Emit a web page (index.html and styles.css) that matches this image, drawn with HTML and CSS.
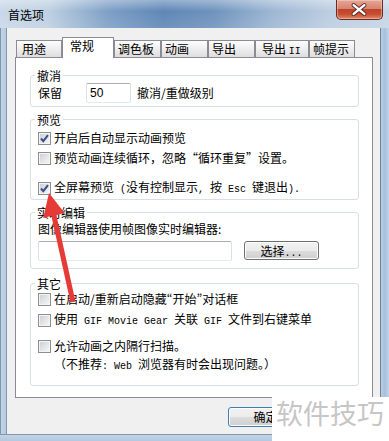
FILE: index.html
```html
<!DOCTYPE html>
<html lang="zh-CN">
<head>
<meta charset="utf-8">
<title>首选项</title>
<link rel="stylesheet" href="styles.css">
</head>
<body>
<div class="window">
  <div class="titlebar">
    <span class="title">首选项</span>
    <div class="close">
      <svg width="47" height="20" viewBox="0 0 47 20">
        <path d="M18 5 L29 14 M29 5 L18 14" stroke="#5a2a22" stroke-width="4.2" stroke-linecap="round"/>
        <path d="M18 5 L29 14 M29 5 L18 14" stroke="#ffffff" stroke-width="2.4" stroke-linecap="round"/>
      </svg>
    </div>
  </div>
  <div class="mid">
    <div class="frame-left"></div>
    <div class="client">
      <div class="tabs">
        <div class="tab w46 p5">用途</div>
        <div class="tab sel">常规</div>
        <div class="tab w47">调色板</div>
        <div class="tab w47">动画</div>
        <div class="tab w47">导出</div>
        <div class="tab w54">导出 <span class="m">II</span></div>
        <div class="tab w46">帧提示</div>
      </div>
      <div class="panel">
        <div class="group g1">
          <div class="gtitle">撤消</div>
          <div class="row r20">
            <span>保留</span>
            <div class="input num">50</div>
            <span class="after">撤消/重做级别</span>
          </div>
        </div>
        <div class="group g2">
          <div class="gtitle">预览</div>
          <div class="row cbrow first">
            <span class="cb"><svg width="11" height="11" viewBox="0 0 11 11"><path d="M2 5.5 L4.3 8.2 L9 2.2" fill="none" stroke="#3a4f86" stroke-width="2"/></svg></span>
            <span>开启后自动显示动画预览</span>
          </div>
          <div class="row cbrow second">
            <span class="cb"></span>
            <span>预览动画连续循环，忽略<span class="fw">“</span>循环重复<span class="fw">”</span>设置。</span>
          </div>
          <div class="row cbrow third">
            <span class="cb"><svg width="11" height="11" viewBox="0 0 11 11"><path d="M2 5.5 L4.3 8.2 L9 2.2" fill="none" stroke="#3a4f86" stroke-width="2"/></svg></span>
            <span>全屏幕预览<span class="m"> (</span>没有控制显示<span class="m">, </span>按<span class="m"> Esc </span>键退出<span class="m">).</span></span>
          </div>
        </div>
        <div class="group g3">
          <div class="gtitle">实时编辑</div>
          <div class="line">图像编辑器使用帧图像实时编辑器:</div>
          <div class="row editrow">
            <div class="input wide"></div>
            <div class="btn choose">选择<span class="m">...</span></div>
          </div>
        </div>
        <div class="group g4">
          <div class="gtitle">其它</div>
          <div class="row cbrow o1">
            <span class="cb"></span>
            <span>在启动/重新启动隐藏<span class="pw">“</span>开始<span class="pw">”</span>对话框</span>
          </div>
          <div class="row cbrow o2">
            <span class="cb"></span>
            <span>使用<span class="m"> GIF Movie Gear </span>关联<span class="m"> GIF </span>文件到右键菜单</span>
          </div>
          <div class="row cbrow o3">
            <span class="cb"></span>
            <span>允许动画之内隔行扫描。</span>
          </div>
          <div class="note">（不推荐<span class="m">: Web </span>浏览器有时会出现问题。）</div>
        </div>
      </div>
      <div class="footer">
        <div class="btn ok">确定</div>
      </div>
    </div>
    <div class="frame-right"></div>
  </div>
  <div class="frame-bottom"></div>
  <svg class="arrow" width="389" height="441" viewBox="0 0 389 441">
    <polygon points="49,193 64.6,213.1 56.4,214.9 75.5,301.4 70.5,302.6 51.4,216.1 43.2,217.9" fill="#e63a37"/>
  </svg>
  <div class="watermark">软件技巧</div>
</div>
</body>
</html>
```

FILE: styles.css
```css
html, body {
  margin: 0;
  padding: 0;
}
body {
  font-family: "Noto Sans CJK SC", "Liberation Sans", sans-serif;
  font-size: 12px;
  color: #000;
  background: #fff;
}
.window {
  position: relative;
  width: 389px;
  height: 441px;
  overflow: hidden;
}
.titlebar {
  height: 28px;
  display: flex;
  align-items: flex-start;
  background:
    linear-gradient(180deg, rgba(255,255,255,0.35) 0, rgba(255,255,255,0) 40%, rgba(255,255,255,0.1) 100%),
    linear-gradient(90deg, #c9d8e8 0, #bfd1e3 12%, #7d9fc6 28%, #5f87b6 42%, #6f93bd 55%, #9db7d3 70%, #bccee1 85%, #c6d5e5 100%);
}
.title {
  margin-left: 8px;
  margin-top: 7px;
  line-height: 16px;
}
.close {
  margin-left: auto;
  margin-right: 6px;
  width: 47px;
  height: 20px;
  box-sizing: border-box;
  border: 1px solid #6b2a20;
  border-top: none;
  border-radius: 0 0 5px 5px;
  background: linear-gradient(180deg, #e6a696 0%, #d78470 45%, #c0422a 50%, #c64f33 75%, #de8a69 100%);
  box-shadow: inset 0 0 0 1px rgba(255,220,210,0.45);
  display: flex;
}
.close svg {
  margin-left: -1px;
  margin-top: 0;
}
.mid {
  display: flex;
  height: 406px;
}
.frame-left {
  width: 7px;
  background: linear-gradient(90deg, #7f95ad 0, #7f95ad 1px, #c3d4e6 1px, #b6c9de 6px, #8496ab 6px, #8496ab 7px);
}
.frame-right {
  width: 9px;
  background: linear-gradient(90deg, #6d829a 0, #6d829a 1px, #b9cde2 1px, #a6c0dc 5px, #c3d5e8 9px);
}
.frame-bottom {
  height: 7px;
  background: linear-gradient(180deg, #8496ab 0, #8496ab 1px, #c2d4e7 1px, #b4c8de 7px);
}
.client {
  width: 373px;
  background: #f0f0f0;
  padding-top: 9px;
  padding-left: 8px;
  box-sizing: border-box;
}
.tabs {
  display: flex;
  height: 21px;
  margin-left: 1px;
  align-items: flex-start;
}
.tab {
  box-sizing: border-box;
  height: 17px;
  margin-top: 3px;
  border: 1px solid #898c95;
  border-bottom: none;
  background: linear-gradient(180deg, #fdfdfd 0, #eeeeee 50%, #dedede 100%);
  padding-left: 3px;
  line-height: 15px;
  white-space: nowrap;
}
.w46 { width: 46px; }
.w47 { width: 47px; }
.w54 { width: 54px; padding-left: 6px; }
.p5 { padding-left: 5px; }
.tab.sel {
  position: relative;
  z-index: 1;
  width: 52px;
  height: 21px;
  margin-top: 0;
  background: #fff;
  padding-left: 7px;
  padding-top: 1px;
  line-height: 14px;
}
.m {
  font-family: "Liberation Mono", monospace;
  font-size: 10px;
  white-space: pre;
}
.panel {
  box-sizing: border-box;
  width: 358px;
  height: 341px;
  margin-top: -1px;
  background: #fff;
  border: 1px solid #898c95;
  padding-left: 14px;
  padding-top: 17px;
}
.group {
  box-sizing: border-box;
  width: 329px;
  border: 1px solid #d5dfe5;
  border-radius: 3px;
  padding: 0 7px;
}
.gtitle {
  display: table;
  margin-top: -7px;
  margin-left: -3px;
  padding: 0 2px;
  background: #fff;
  line-height: 14px;
}
.row {
  display: flex;
  align-items: center;
  line-height: 14px;
}
.r20 { height: 20px; }
.g1 { padding-bottom: 3px; }
.g2 { margin-top: 12px; padding-bottom: 3px; }
.g3 { margin-top: 12px; padding-bottom: 7px; }
.g4 { margin-top: 14px; padding-bottom: 11px; }
.input {
  box-sizing: border-box;
  height: 20px;
  background: #fff;
  border: 1px solid #dbdfe6;
  border-top-color: #abadb3;
  border-bottom-color: #e3e9ef;
  border-radius: 2px;
}
.num {
  width: 45px;
  margin-left: 24px;
  font-family: "Liberation Sans", sans-serif;
  font-size: 12px;
  line-height: 18px;
  padding-left: 3px;
}
.after { margin-left: 6px; }
.cbrow { height: 16px; }
.first { margin-top: 3px; }
.second { margin-top: 4px; }
.third { margin-top: 14px; }
.o1 { margin-top: 0; }
.o2 { margin-top: 5px; }
.o3 { margin-top: 10px; }
.cb {
  box-sizing: border-box;
  width: 13px;
  height: 13px;
  flex: none;
  margin-right: 3px;
  border: 1px solid #8e8f8f;
  background: linear-gradient(135deg, #c9cdd3 0, #e4e6e9 55%, #f7f7f7 100%);
  box-shadow: inset 0 0 0 1px #f4f4f4;
  display: flex;
  align-items: center;
  justify-content: center;
}
.fw { font-feature-settings: "fwid" 1; }
.pw { font-feature-settings: "pwid" 1; }
.line {
  margin-top: 2px;
  line-height: 14px;
}
.editrow {
  margin-top: 5px;
  align-items: flex-start;
}
.wide { width: 194px; }
.btn {
  box-sizing: border-box;
  width: 75px;
  text-align: center;
  border: 1px solid #707070;
  border-radius: 3px;
  background: linear-gradient(180deg, #f2f2f2 0%, #ebebeb 50%, #dddddd 50%, #cfcfcf 100%);
  box-shadow: inset 0 0 0 1px #fcfcfc;
}
.choose {
  margin-left: 12px;
  height: 19px;
  line-height: 17px;
}
.note {
  margin-top: 3px;
  line-height: 14px;
  padding-left: 16px;
}
.footer {
  height: 36px;
  padding-left: 213px;
  padding-top: 9px;
  box-sizing: border-box;
}
.ok {
  height: 20px;
  line-height: 18px;
  border-color: #3c7fb1;
}
.arrow {
  position: absolute;
  left: 0;
  top: 0;
  pointer-events: none;
}
.watermark {
  position: absolute;
  right: 0;
  bottom: 0;
  width: 117px;
  height: 44px;
  box-sizing: border-box;
  background: #fff;
  color: #c6c6c6;
  font-size: 27px;
  line-height: 30px;
  padding-left: 4px;
  padding-top: 1px;
  white-space: nowrap;
}
```
